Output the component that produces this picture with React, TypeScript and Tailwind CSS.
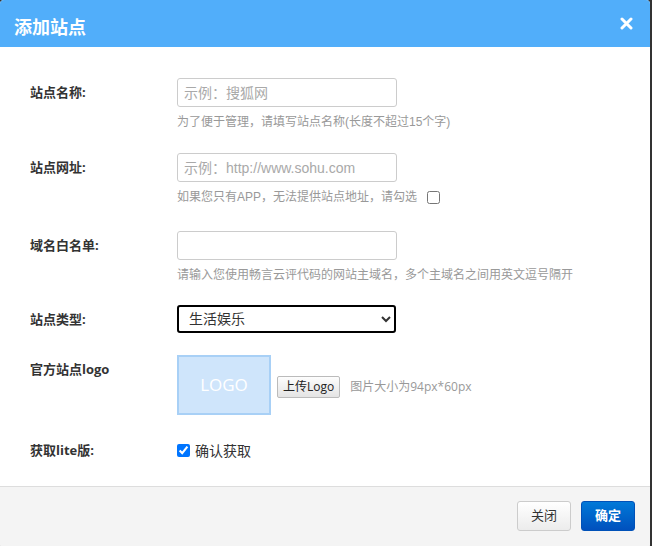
import { useState } from "react";

const cjk = "font-['Open_Sans','Noto_Sans_CJK_SC',sans-serif]";
const arialCjk = "font-['Liberation_Sans','Noto_Sans_CJK_SC',sans-serif]";

type RowProps = {
  label: string;
  children: React.ReactNode;
  className?: string;
};

const Row = ({ label, children, className = "" }: RowProps) => (
  <div className={`flex ${className}`}>
    <div className="w-[177px] shrink-0 pl-[30px] text-[13px] font-bold text-[#333] leading-[29px]">{label}</div>
    <div className="flex-1">{children}</div>
  </div>
);

const TextInput = ({ placeholder }: { placeholder?: string }) => (
  <input
    placeholder={placeholder}
    className={`${arialCjk} block h-[29px] w-[220px] rounded-[3px] border border-[#ccc] px-[6px] text-[14px] text-[#333] placeholder:text-[#a9a9a9] outline-none`}
  />
);

const Hint = ({ children }: { children: React.ReactNode }) => (
  <div className={`${arialCjk} mt-[5px] flex items-center text-[12px] text-[#999] leading-[20px]`}>{children}</div>
);

export default function App() {
  const [lite, setLite] = useState(true);
  const [noSite, setNoSite] = useState(false);

  return (
    <div className={`${cjk} min-h-screen w-full bg-[#333]`}>
      <div className="w-[650px] h-[548px] overflow-hidden rounded-[4px] bg-white flex flex-col">
        {/* HEADER */}
        <div className="h-[47px] shrink-0 bg-[#51aefa] flex items-center justify-between pl-[14px] pr-[17px]">
          <h1 className="pt-[8px] text-[18px] font-bold text-white">添加站点</h1>
          <button className="text-white">
            <svg width="13" height="13" viewBox="0 0 13 13">
              <path d="M2 2 L11 11 M11 2 L2 11" stroke="white" strokeWidth="3" strokeLinecap="round" />
            </svg>
          </button>
        </div>

        {/* BODY */}
        <div className="flex-1 pt-[31px]">
          <Row label="站点名称:">
            <TextInput placeholder="示例：搜狐网" />
            <Hint>为了便于管理，请填写站点名称(长度不超过15个字)</Hint>
          </Row>
          <Row label="站点网址:" className="mt-[21px]">
            <TextInput placeholder="示例：http://www.sohu.com" />
            <Hint>
              如果您只有APP，无法提供站点地址，请勾选
              <input
                type="checkbox"
                checked={noSite}
                onChange={() => setNoSite(!noSite)}
                className="ml-[10px] h-[13px] w-[13px]"
              />
            </Hint>
          </Row>
          <Row label="域名白名单:" className="mt-[24px]">
            <TextInput />
            <Hint>请输入您使用畅言云评代码的网站主域名，多个主域名之间用英文逗号隔开</Hint>
          </Row>
          <Row label="站点类型:" className="mt-[20px]">
            <select
              defaultValue="life"
              className={`${arialCjk} block h-[28px] w-[219px] rounded-[3px] border-2 border-black px-[6px] text-[14px] text-[#333] bg-white`}
            >
              <option value="life">生活娱乐</option>
              <option value="news">新闻资讯</option>
            </select>
          </Row>
          <Row label="官方站点logo" className="mt-[21px]">
            <div className="flex items-center">
              <div className="flex h-[60px] w-[94px] items-center justify-center border-2 border-[#a8d0f6] bg-[#cfe5fb] text-[17px] text-white">
                LOGO
              </div>
              <button className="ml-[6px] mt-[3px] h-[22px] rounded-[2px] border border-[#bbb] bg-gradient-to-b from-[#fdfdfd] to-[#e4e4e4] px-[5px] text-[12px] text-[#222]">
                上传Logo
              </button>
              <span className="ml-[10px] mt-[3px] text-[12px] text-[#999]">图片大小为94px*60px</span>
            </div>
          </Row>
          <Row label="获取lite版:" className="mt-[21px]">
            <label className="flex h-[29px] items-center text-[14px] text-[#333]">
              <input
                type="checkbox"
                checked={lite}
                onChange={() => setLite(!lite)}
                className="h-[13px] w-[13px] accent-[#0075ff]"
              />
              <span className="ml-[5px]">确认获取</span>
            </label>
          </Row>
        </div>

        {/* FOOTER */}
        <div className="h-[62px] shrink-0 border-t border-[#ddd] bg-[#f4f4f4] flex items-start justify-end gap-[10px] pt-[14px] pr-[15px]">
          <button className="h-[30px] w-[54px] rounded-[3px] border border-[#ccc] bg-gradient-to-b from-white to-[#ececec] text-[13px] text-[#333]">
            关闭
          </button>
          <button className="h-[30px] w-[54px] rounded-[3px] border border-[#0051b8] bg-gradient-to-b from-[#0279d8] to-[#0050bd] text-[13px] font-bold text-white">
            确定
          </button>
        </div>
      </div>
    </div>
  );
}
